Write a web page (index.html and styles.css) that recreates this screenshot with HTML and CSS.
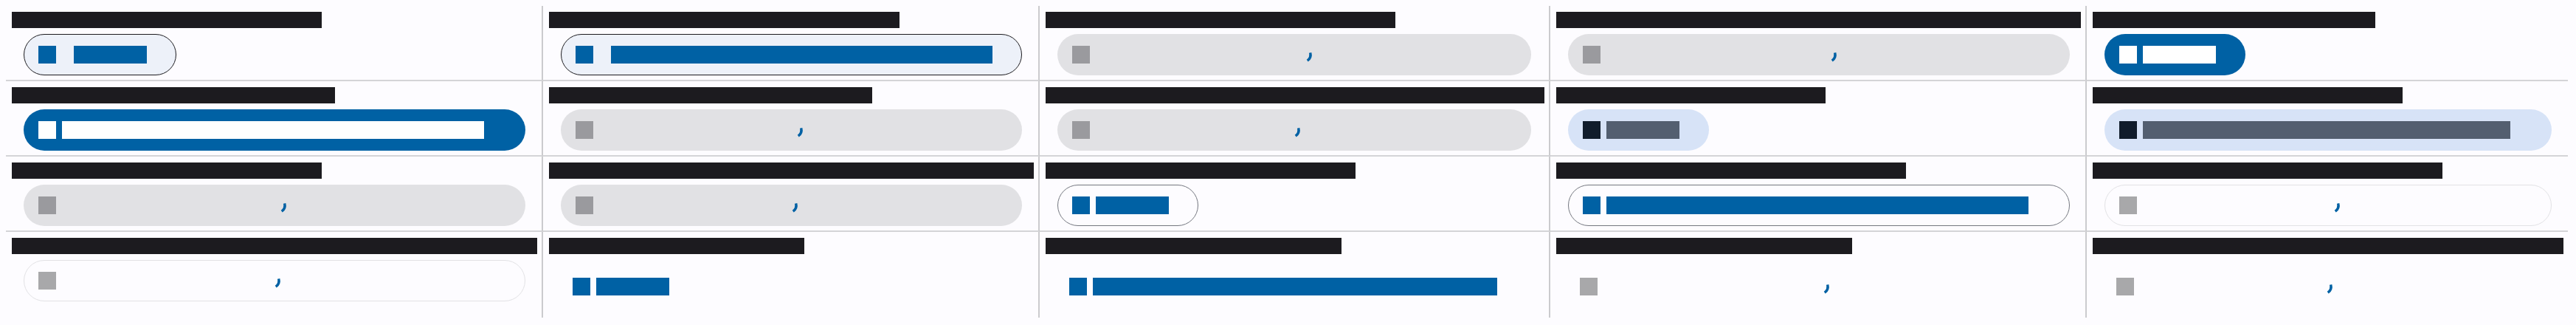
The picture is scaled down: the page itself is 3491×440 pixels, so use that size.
FILE: index.html
```html
<!DOCTYPE html>
<html lang="en">
<head>
<meta charset="utf-8">
<title>Button states</title>
<link rel="stylesheet" href="styles.css">
</head>
<body>
<div class="grid">
  <!-- Row 1 -->
  <div class="cell">
    <span class="hd w420">Outlined · focused · icon</span>
    <button class="btn btn-focus pr40"><span class="ic"></span><span class="lb w99">Button</span></button>
  </div>
  <div class="cell">
    <span class="hd w475">Outlined · focused · long label</span>
    <button class="btn btn-focus pr40"><span class="ic"></span><span class="lb w517">Button with a much longer label</span></button>
  </div>
  <div class="cell">
    <span class="hd w474">Filled · disabled · loading</span>
    <button class="btn btn-disabled pr40 is-loading"><span class="ic"></span><span class="lb w550">Button with a longer label</span><svg class="spin sp-c" width="12" height="17" viewBox="0 0 12 17"><path d="M6.66 2.41A10 10 0 0 1 2.74 13.19"/></svg></button>
  </div>
  <div class="cell">
    <span class="hd w711">Filled · disabled · loading · long label with trailing icon</span>
    <button class="btn btn-disabled pr56 is-loading"><span class="ic"></span><span class="lb w572">Button with a much longer label text</span><svg class="spin sp-c" width="12" height="17" viewBox="0 0 12 17"><path d="M6.66 2.41A10 10 0 0 1 2.74 13.19"/></svg></button>
  </div>
  <div class="cell">
    <span class="hd w383">Filled · enabled · icon</span>
    <button class="btn btn-filled pr40"><span class="ic"></span><span class="lb w99">Button</span></button>
  </div>

  <!-- Row 2 -->
  <div class="cell">
    <span class="hd w438">Filled · enabled · long label</span>
    <button class="btn btn-filled pr56"><span class="ic"></span><span class="lb w572">Button with a much longer label text</span></button>
  </div>
  <div class="cell">
    <span class="hd w438">Filled · disabled · loading</span>
    <button class="btn btn-disabled pr56 is-loading"><span class="ic"></span><span class="lb w517">Button with a longer label</span><svg class="spin sp-b" width="12" height="17" viewBox="0 0 12 17"><path d="M6.66 2.41A10 10 0 0 1 2.74 13.19"/></svg></button>
  </div>
  <div class="cell">
    <span class="hd w676">Tonal · disabled · loading · long label text</span>
    <button class="btn btn-disabled pr40 is-loading"><span class="ic"></span><span class="lb w550">Button with a longer label</span><svg class="spin sp-a" width="12" height="17" viewBox="0 0 12 17"><path d="M6.66 2.41A10 10 0 0 1 2.74 13.19"/></svg></button>
  </div>
  <div class="cell">
    <span class="hd w365">Tonal · enabled · icon</span>
    <button class="btn btn-tonal pr40"><span class="ic"></span><span class="lb w99">Button</span></button>
  </div>
  <div class="cell">
    <span class="hd w420">Tonal · enabled · long label</span>
    <button class="btn btn-tonal pr56"><span class="ic"></span><span class="lb w498">Button with a longer label</span></button>
  </div>

  <!-- Row 3 -->
  <div class="cell">
    <span class="hd w420">Tonal · disabled · loading</span>
    <button class="btn btn-disabled pr56 is-loading"><span class="ic"></span><span class="lb w572">Button with a much longer label text</span><svg class="spin sp-b" width="12" height="17" viewBox="0 0 12 17"><path d="M6.66 2.41A10 10 0 0 1 2.74 13.19"/></svg></button>
  </div>
  <div class="cell">
    <span class="hd w657">Elevated · disabled · loading · long label</span>
    <button class="btn btn-disabled pr56 is-loading"><span class="ic"></span><span class="lb w517">Button with a longer label</span><svg class="spin sp-a" width="12" height="17" viewBox="0 0 12 17"><path d="M6.66 2.41A10 10 0 0 1 2.74 13.19"/></svg></button>
  </div>
  <div class="cell">
    <span class="hd w420">Outlined · enabled · icon</span>
    <button class="btn btn-outlined pr40"><span class="ic"></span><span class="lb w99">Button</span></button>
  </div>
  <div class="cell">
    <span class="hd w474">Outlined · enabled · long label</span>
    <button class="btn btn-outlined pr56"><span class="ic"></span><span class="lb w572">Button with a much longer label text</span></button>
  </div>
  <div class="cell">
    <span class="hd w474">Outlined · disabled · loading</span>
    <button class="btn btn-outlined-disabled pr56 is-loading"><span class="ic"></span><span class="lb w498">Button with a longer label</span><svg class="spin sp-b" width="12" height="17" viewBox="0 0 12 17"><path d="M6.66 2.41A10 10 0 0 1 2.74 13.19"/></svg></button>
  </div>

  <!-- Row 4 -->
  <div class="cell">
    <span class="hd w712">Outlined · disabled · loading · long label with trailing icon</span>
    <button class="btn btn-outlined-disabled pr56 is-loading"><span class="ic"></span><span class="lb w572">Button with a much longer label text</span><svg class="spin sp-a" width="12" height="17" viewBox="0 0 12 17"><path d="M6.66 2.41A10 10 0 0 1 2.74 13.19"/></svg></button>
  </div>
  <div class="cell">
    <span class="hd w346">Text · enabled · icon</span>
    <button class="btn btn-text"><span class="ic"></span><span class="lb w99">Button</span></button>
  </div>
  <div class="cell">
    <span class="hd w401">Text · enabled · long label</span>
    <button class="btn btn-text"><span class="ic"></span><span class="lb w548">Button with a longer label</span></button>
  </div>
  <div class="cell">
    <span class="hd w401">Text · disabled · loading</span>
    <button class="btn btn-text btn-text-disabled pr56 is-loading"><span class="ic"></span><span class="lb w572">Button with a much longer label text</span><svg class="spin sp-b" width="12" height="17" viewBox="0 0 12 17"><path d="M6.66 2.41A10 10 0 0 1 2.74 13.19"/></svg></button>
  </div>
  <div class="cell">
    <span class="hd w638">Text · disabled · loading · long label with trailing icon</span>
    <button class="btn btn-text btn-text-disabled pr56 is-loading"><span class="ic"></span><span class="lb w498">Button with a longer label</span><svg class="spin sp-a" width="12" height="17" viewBox="0 0 12 17"><path d="M6.66 2.41A10 10 0 0 1 2.74 13.19"/></svg></button>
  </div>
</div>
</body>
</html>
```

FILE: styles.css
```css
html, body {
  background: #fdfcff;
}
body {
  margin: 8px;
  font-family: Roboto, "Liberation Sans", sans-serif;
}

.grid {
  display: grid;
  grid-template-columns: 728px 673px 692px 727px 652px;
}

.cell {
  display: flex;
  flex-direction: column;
  align-items: flex-start;
  gap: 8px;
  padding: 8px 6px 6px 8px;
  border-right: 2px solid #cbcbce;
  border-bottom: 2px solid #d4d4d7;
}
.cell:nth-child(5n) {
  border-right: none;
}
.cell:nth-child(n+16) {
  border-bottom: none;
}

/* heading (rendered as a solid block, like the reference) */
.hd {
  display: block;
  height: 22px;
  line-height: 22px;
  font-size: 12px;
  color: #1c1b1f;
  background: #1c1b1f;
  overflow: hidden;
  white-space: nowrap;
}

/* widths */
.w346 { width: 346px; }
.w365 { width: 365px; }
.w383 { width: 383px; }
.w401 { width: 401px; }
.w420 { width: 420px; }
.w438 { width: 438px; }
.w474 { width: 474px; }
.w475 { width: 475px; }
.w638 { width: 638px; }
.w657 { width: 657px; }
.w676 { width: 676px; }
.w711 { width: 711px; }
.w712 { width: 712px; }
.w99 { width: 99px; }
.w498 { width: 498px; }
.w517 { width: 517px; }
.w548 { width: 548px; }
.w550 { width: 550px; }
.w572 { width: 572px; }

/* buttons */
.btn {
  appearance: none;
  position: relative;
  display: flex;
  align-items: center;
  gap: 8px;
  box-sizing: border-box;
  height: 56px;
  margin: 0 0 0 16px;
  padding: 0 15px 0 19px;
  border: 1px solid transparent;
  border-radius: 28px;
  background: transparent;
  font: inherit;
  color: #0061a4;
  cursor: pointer;
}
.pr40 { padding-right: 39px; }
.pr56 { padding-right: 55px; }

.ic {
  display: block;
  flex: none;
  width: 24px;
  height: 24px;
  background: currentColor;
}
.lb {
  display: block;
  flex: none;
  height: 24px;
  line-height: 24px;
  font-size: 14px;
  background: currentColor;
  overflow: hidden;
  white-space: nowrap;
  text-align: left;
}

.btn-filled {
  background: #0061a4;
  color: #ffffff;
}
.btn-focus {
  gap: 24px;
  background: #edf1f9;
  border-color: #1c1b1f;
  color: #0061a4;
}
.btn-outlined {
  border-color: #74777f;
  color: #0061a4;
}
.btn-tonal {
  background: #d7e3f7;
  color: #535f70;
}
.btn-tonal .ic {
  color: #101c2b;
}
.btn-disabled {
  background: #e1e1e4;
  color: #9a9a9e;
}
.btn-outlined-disabled {
  border-color: #e2e2e5;
  color: #a8a8aa;
}
.btn-text {
  height: 72px;
  padding-left: 15px;
}
.btn-text.pr56 {
  padding-right: 55px;
}
.btn-text-disabled {
  color: #a8a8aa;
}

.is-loading .lb {
  visibility: hidden;
}

/* loading spinner overlay */
.spin {
  position: absolute;
  top: calc(50% - 5px);
  fill: none;
  stroke: #0061a4;
  stroke-width: 3.5;
}
.sp-a { left: calc(50% - 0.7px); }
.sp-b { left: calc(50% + 6.8px); }
.sp-c { left: calc(50% + 14.8px); }
```
